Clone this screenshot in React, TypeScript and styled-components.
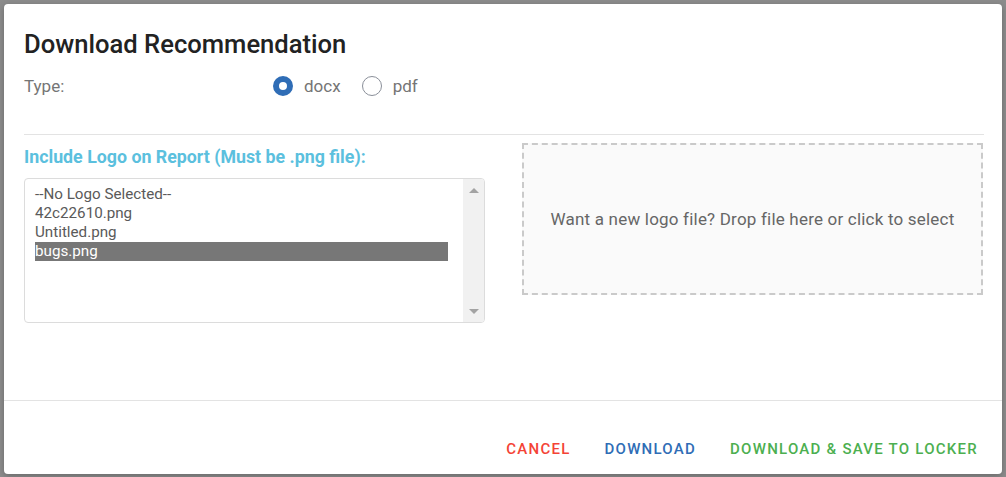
import styled, { createGlobalStyle } from "styled-components";

const GlobalStyle = createGlobalStyle`
	html, body {
		margin: 0;
		padding: 0;
		background: #8c8c8c;
		font-family: Roboto, "Liberation Sans", Arial, sans-serif;
	}
	* {
		box-sizing: border-box;
	}
`;

const SOverlay = styled.div`
	width: 1006px;
	height: 477px;
	padding: 4px 4px 3px 4px;
	background: #8c8c8c;
`;

const SDialog = styled.div`
	width: 998px;
	height: 470px;
	background: #fff;
	border-radius: 4px;
	display: flex;
	flex-direction: column;
	box-shadow: 0 2px 6px rgba(0, 0, 0, 0.25);
`;

const SContent = styled.div`
	flex: 1;
	padding: 24px 18px 0 20px;
	display: flex;
	flex-direction: column;
`;

const STitle = styled.h2`
	margin: 0;
	font-size: 25.6px;
	line-height: 32px;
	font-weight: 500;
	color: #222;
`;

const STypeRow = styled.div`
	display: flex;
	align-items: center;
	height: 36px;
	margin-top: 8px;
`;

const STypeLabel = styled.span`
	width: 249px;
	font-size: 17px;
	color: #757575;
`;

const SRadioLabel = styled.label`
	display: flex;
	align-items: center;
	gap: 11px;
	margin-right: 21px;
	font-size: 17px;
	color: #757575;
	cursor: pointer;
`;

const SRadio = styled.span<{ checked?: boolean }>`
	width: 20px;
	height: 20px;
	border-radius: 50%;
	box-sizing: border-box;
	border: ${(p) => (p.checked ? "6px solid #2f6db6" : "1px solid #8a8f99")};
	background: #fff;
`;

const SDivider = styled.hr`
	margin: 30px 0 0 0;
	border: none;
	border-top: 1px solid #e3e3e3;
`;

const SColumns = styled.div`
	display: grid;
	grid-template-columns: 461px 461px;
	column-gap: 37px;
	margin-top: 8px;
`;

const SLogoLabel = styled.div`
	margin-top: 4px;
	font-size: 17.8px;
	line-height: 20px;
	font-weight: 700;
	color: #5bc0de;
`;

const SListBox = styled.div`
	margin-top: 11px;
	height: 145px;
	border: 1px solid #dcdcdc;
	border-radius: 4px;
	display: flex;
	overflow: hidden;
`;

const SOptions = styled.div`
	flex: 1;
	padding: 6px 15px 0 10px;
`;

const SOption = styled.div<{ selected?: boolean }>`
	font-size: 15.2px;
	line-height: 19px;
	color: ${(p) => (p.selected ? "#fff" : "#5a5a5a")};
	background: ${(p) => (p.selected ? "#777" : "transparent")};
`;

const SScrollbar = styled.div`
	width: 21px;
	background: #f1f1f1;
	display: flex;
	flex-direction: column;
	justify-content: space-between;
	align-items: center;
	padding: 9px 0 8px 0;
`;

const SArrow = styled.span<{ down?: boolean }>`
	width: 0;
	height: 0;
	border-left: 5px solid transparent;
	border-right: 5px solid transparent;
	${(p) =>
		p.down
			? "border-top: 5px solid #a3a3a3;"
			: "border-bottom: 5px solid #a3a3a3;"}
`;

const SDropZone = styled.div`
	height: 152px;
	border: 2px dashed #cacaca;
	background: #fafafa;
	display: flex;
	align-items: center;
	justify-content: center;
	font-size: 17px;
	color: #666;
	letter-spacing: 0.2px;
	cursor: pointer;
`;

const SFooter = styled.div`
	height: 74px;
	border-top: 1px solid #e3e3e3;
	display: flex;
	justify-content: flex-end;
	align-items: center;
	padding: 22px 8px 0 0;
	gap: 2px;
`;

const SButton = styled.button<{ color: string }>`
	background: none;
	border: none;
	font-family: inherit;
	font-size: 15px;
	font-weight: 500;
	letter-spacing: 1.25px;
	text-transform: uppercase;
	color: ${(p) => p.color};
	padding: 8px 16px;
	cursor: pointer;
`;

const files = ["--No Logo Selected--", "42c22610.png", "Untitled.png", "bugs.png"];

export default function App() {
	return (
		<>
			<GlobalStyle />
			<SOverlay>
				<SDialog>
					<SContent>
						<STitle>Download Recommendation</STitle>
						<STypeRow>
							<STypeLabel>Type:</STypeLabel>
							<SRadioLabel>
								<SRadio checked />
								docx
							</SRadioLabel>
							<SRadioLabel>
								<SRadio />
								pdf
							</SRadioLabel>
						</STypeRow>
						<SDivider />
						<SColumns>
							<div>
								<SLogoLabel>Include Logo on Report (Must be .png file):</SLogoLabel>
								<SListBox>
									<SOptions>
										{files.map((f) => (
											<SOption key={f} selected={f === "bugs.png"}>
												{f}
											</SOption>
										))}
									</SOptions>
									<SScrollbar>
										<SArrow />
										<SArrow down />
									</SScrollbar>
								</SListBox>
							</div>
							<SDropZone>Want a new logo file? Drop file here or click to select</SDropZone>
						</SColumns>
					</SContent>
					<SFooter>
						<SButton color="#f44336">Cancel</SButton>
						<SButton color="#2f6db6">Download</SButton>
						<SButton color="#4caf50">Download &amp; Save to Locker</SButton>
					</SFooter>
				</SDialog>
			</SOverlay>
		</>
	);
}
